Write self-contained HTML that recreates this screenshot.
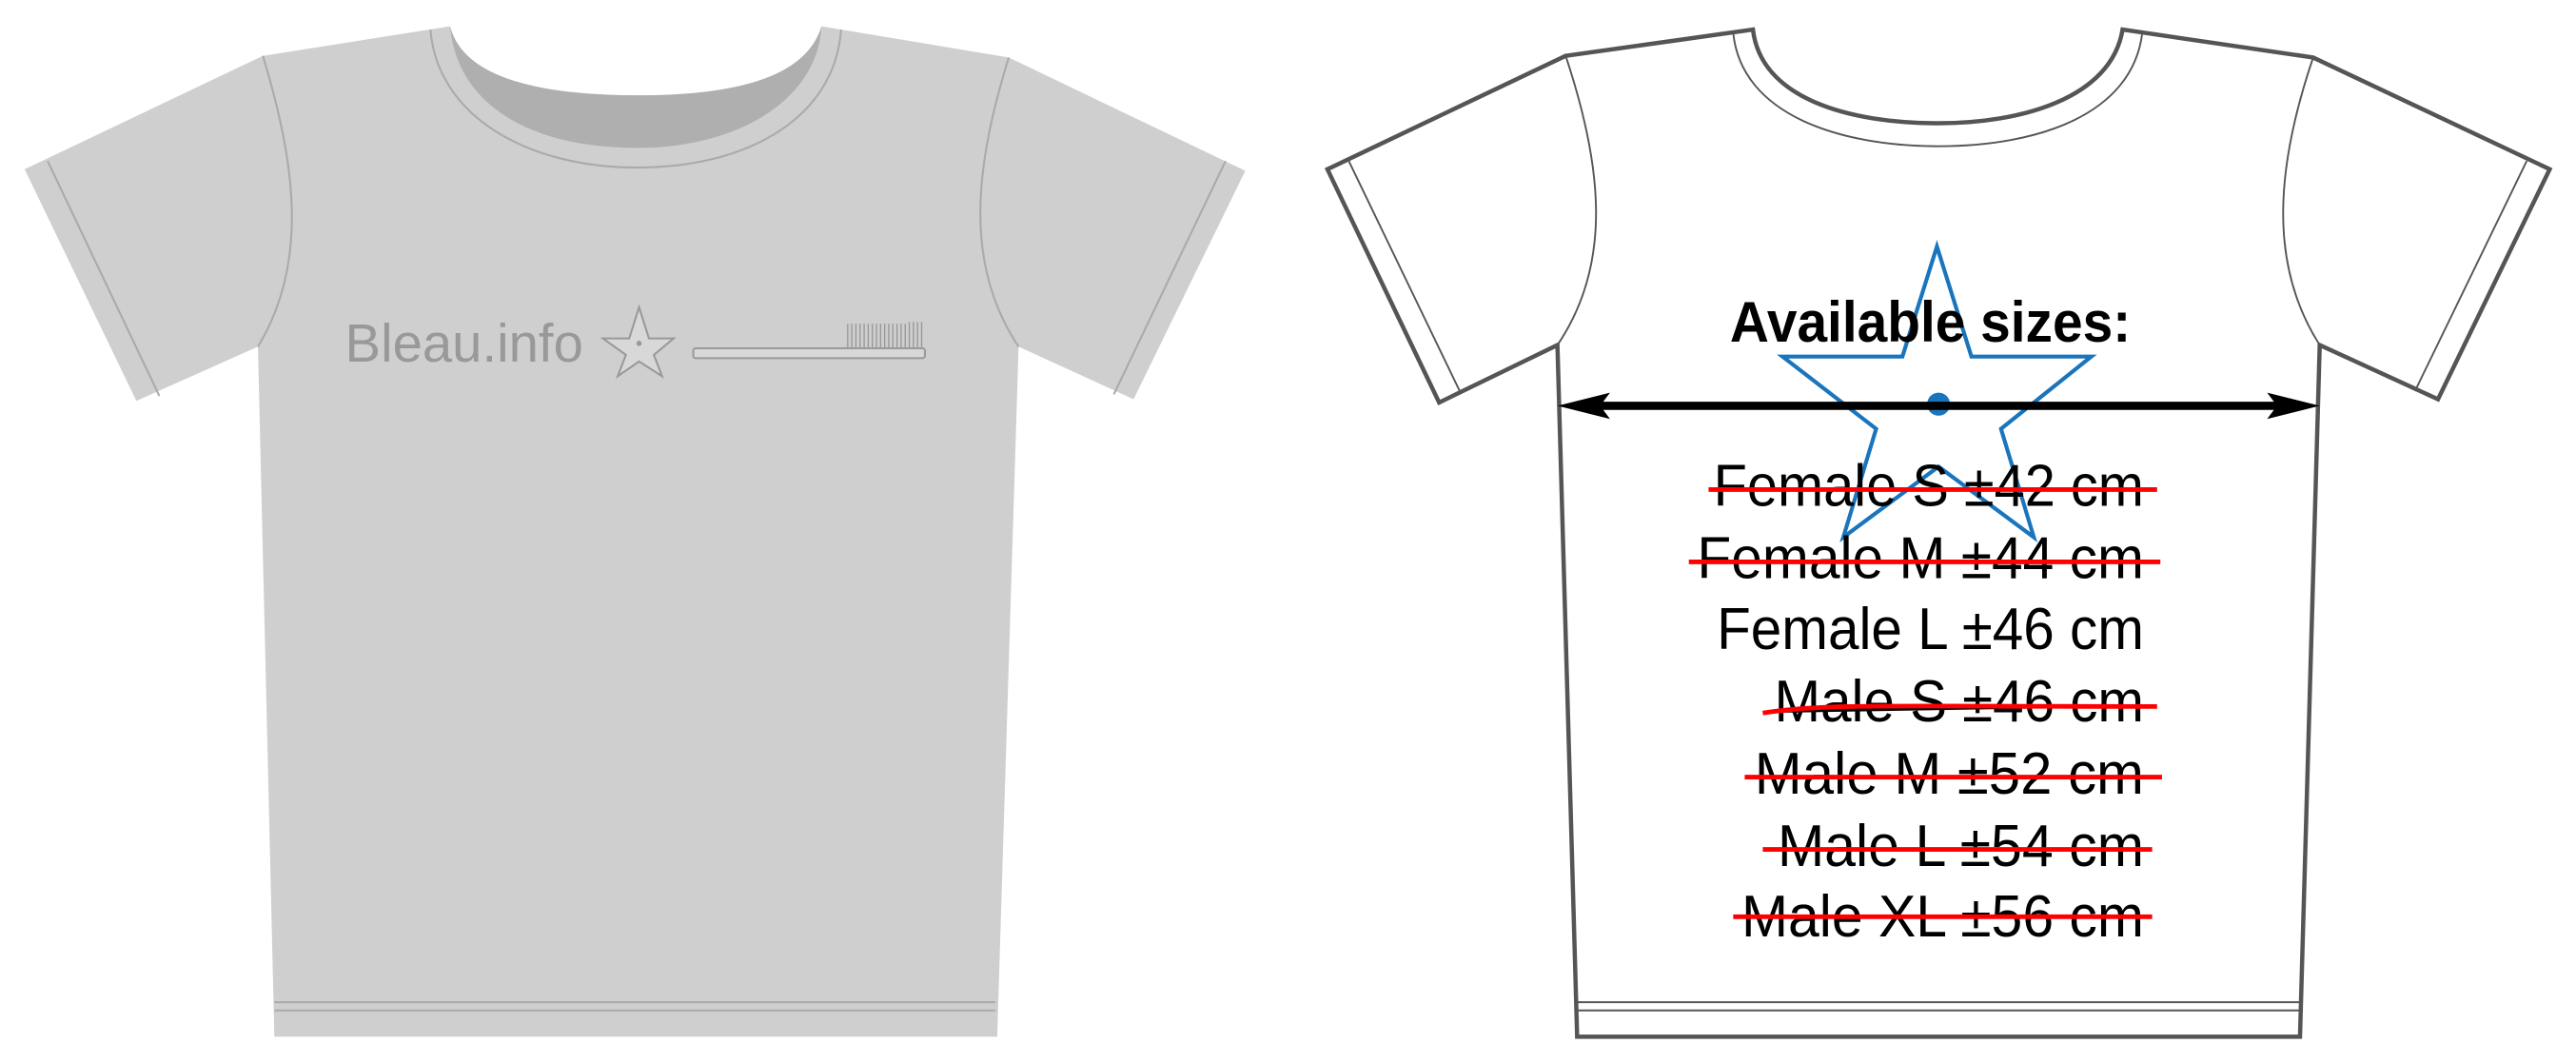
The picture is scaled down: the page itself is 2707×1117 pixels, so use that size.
<!DOCTYPE html>
<html><head><meta charset="utf-8"><style>
html,body{margin:0;padding:0;background:#fff;width:2707px;height:1117px;overflow:hidden}
svg{display:block}
</style></head><body>
<svg width="2707" height="1117" viewBox="0 0 1568 647" preserveAspectRatio="none" xmlns="http://www.w3.org/2000/svg">
<!-- LEFT SHIRT -->
<path d="M274,16 L160,34 L15,103 L83,244 L157,211 L167,631 L607,631 L620,211 L690,243 L758,104 L614,35 L500,16 C490,50 440,58 388,58 C330,58 282,48 274,16 Z" fill="#cfcfcf"/>
<path d="M274,16 C282,48 330,58 388,58 C440,58 490,50 500,16 C498,60 450,90 388,90 C320,90 278,62 274,16 Z" fill="#b0afaf"/>
<g fill="none" stroke="#aaa" stroke-width="1.2">
<path d="M262,18 C266,70 320,102 388,102 C455,102 508,72 512,18"/>
<path d="M160,34 C180,100 188,160 157,211"/>
<path d="M614,35 C594,100 586,160 620,211"/>
<path d="M29,98 L97,241"/>
<path d="M746,98 L678,240"/>
<path d="M167,610 L606,610 M167,615 L606,615"/>
</g>
<text x="210" y="220" font-family="Liberation Sans, sans-serif" font-size="33" fill="#999" textLength="145" lengthAdjust="spacingAndGlyphs">Bleau.info</text>
<polygon points="389,187 395,206 410,206 398,216 403,229 389,220 376,229 381,216 367,206 383,206" fill="#d8d8d8" stroke="#999" stroke-width="1.2"/>
<circle cx="389" cy="209" r="1.6" fill="#999"/>
<rect x="422" y="212" width="141" height="6" rx="1.5" fill="#d8d8d8" stroke="#999" stroke-width="1.2"/>
<g stroke="#999" stroke-width="0.8">
<path d="M516,197V212M518.5,197V212M521,197V212M523.5,197V212M526,197V212M528.5,197V212M531,197V212M533.5,197V212M536,197V212M538.5,197V212M541,197V212M543.5,197V212M546,197V212M548.5,197V212M551,197V212M553.5,196V212M556,196V212M558.5,196V212M561,196V212"/>
</g>
<!-- RIGHT SHIRT -->
<path d="M1067,18 L953,34 L808,103 L876,245 L948,210 L960,631 L1400,631 L1412,210 L1484,243 L1552,103 L1408,35 L1292,18 C1285,60 1230,75 1180,75 C1125,75 1072,60 1067,18 Z" fill="#fff" stroke="#555" stroke-width="2.6" stroke-linejoin="miter"/>
<g fill="none" stroke="#555" stroke-width="1.1">
<path d="M1055,20 C1060,70 1120,89 1180,89 C1240,89 1298,70 1304,20"/>
<path d="M953,34 C975,100 982,160 948,210"/>
<path d="M1408,35 C1386,100 1380,160 1412,210"/>
<path d="M821,98 L889,239"/>
<path d="M1538,98 L1470,238"/>
<path d="M960,610 L1400,610 M960,615 L1400,615"/>
</g>
<polygon points="1179,150 1200,217 1273,217 1218,261 1238,327 1180,284 1122,327 1142,261 1085,217 1158,217" fill="none" stroke="#1a75bc" stroke-width="2.4"/>
<circle cx="1180" cy="246" r="7" fill="#1a75bc"/>
<text x="1053" y="208" font-family="Liberation Sans, sans-serif" font-weight="bold" font-size="35" fill="#000" textLength="244" lengthAdjust="spacingAndGlyphs">Available sizes:</text>
<path d="M960,247 L1400,247" stroke="#000" stroke-width="5"/>
<polygon points="948,247 980,239 974,247 980,255" fill="#000"/>
<polygon points="1412,247 1380,239 1386,247 1380,255" fill="#000"/>
<g font-family="Liberation Sans, sans-serif" font-size="36" fill="#000">
<text x="1043" y="308" textLength="262" lengthAdjust="spacingAndGlyphs">Female S  ±42 cm</text>
<text x="1033" y="352" textLength="272" lengthAdjust="spacingAndGlyphs">Female M  ±44 cm</text>
<text x="1045" y="395" textLength="260" lengthAdjust="spacingAndGlyphs">Female L  ±46 cm</text>
<text x="1080" y="439" textLength="225" lengthAdjust="spacingAndGlyphs">Male S  ±46 cm</text>
<text x="1068" y="483" textLength="237" lengthAdjust="spacingAndGlyphs">Male M  ±52 cm</text>
<text x="1082" y="527" textLength="223" lengthAdjust="spacingAndGlyphs">Male L  ±54 cm</text>
<text x="1060" y="570" textLength="245" lengthAdjust="spacingAndGlyphs">Male XL  ±56 cm</text>
</g>
<g stroke="#f00" stroke-width="2.8">
<path d="M1040,298 L1313,298"/>
<path d="M1028,342 L1315,342"/>
<path d="M1073,434 C1110,428 1150,430 1313,430"/>
<path d="M1062,473 L1316,473"/>
<path d="M1073,517 L1310,517"/>
<path d="M1055,558 L1310,558"/>
</g>
</svg>
</body></html>
